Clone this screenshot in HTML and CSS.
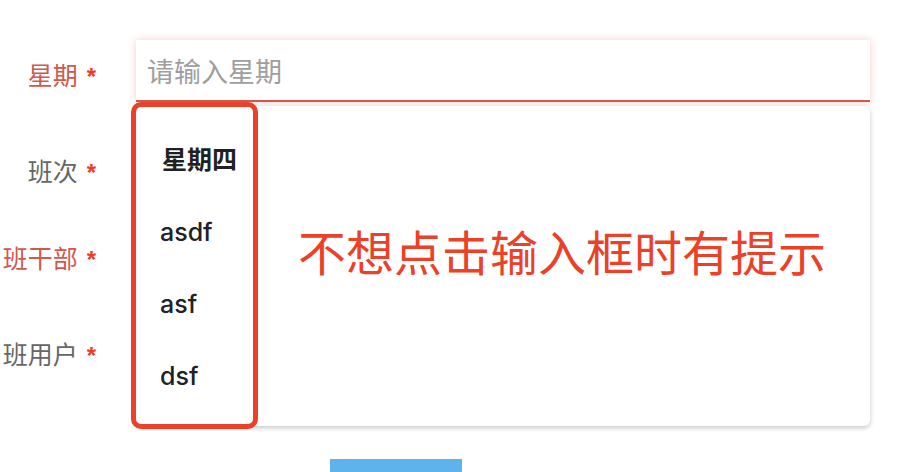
FILE: index.html
```html
<!DOCTYPE html>
<html lang="zh-CN">
<head>
<meta charset="utf-8">
<title>表单</title>
<link rel="stylesheet" href="styles.css">
</head>
<body>
<form class="form">
  <div class="row error">
    <label class="label">星期<span class="req">*</span></label>
    <div class="field">
      <input class="input input-active" type="text" placeholder="请输入星期">
      <ul class="dropdown">
        <li class="option selected">星期四</li>
        <li class="option">asdf</li>
        <li class="option">asf</li>
        <li class="option">dsf</li>
      </ul>
    </div>
  </div>
  <div class="row">
    <label class="label">班次<span class="req">*</span></label>
    <div class="field"><input class="input" type="text"></div>
  </div>
  <div class="row error">
    <label class="label">班干部<span class="req">*</span></label>
    <div class="field"><input class="input" type="text"></div>
  </div>
  <div class="row">
    <label class="label">班用户<span class="req">*</span></label>
    <div class="field"><input class="input" type="text"></div>
  </div>
  <div class="actions">
    <button class="btn" type="button"></button>
  </div>
  <div class="mark-box"></div>
  <div class="mark-text">不想点击输入框时有提示</div>
</form>
</body>
</html>
```

FILE: styles.css
```css
html, body {
  margin: 0;
  padding: 0;
  height: 472px;
  overflow: hidden;
  background: #ffffff;
  font-family: Inter, "Noto Sans CJK SC", sans-serif;
}

.form {
  position: relative;
  display: flex;
  flex-direction: column;
  padding-top: 40px;
}

.row {
  display: flex;
  align-items: center;
  height: 62px;
  margin-bottom: 25px;
}

.row.error {
  margin-bottom: 34px;
}

.label {
  width: 96px;
  margin-right: 40px;
  text-align: right;
  font-family: "Noto Sans CJK SC", sans-serif;
  font-size: 25px;
  line-height: 62px;
  padding-top: 8px;
  color: #666666;
  white-space: nowrap;
  box-sizing: border-box;
}

.row.error .label {
  color: #d2574c;
}

.req {
  color: #f03a2a;
  margin-left: 9px;
  font-family: "Liberation Sans", sans-serif;
  font-size: 24px;
  font-weight: 700;
}

.field {
  position: relative;
  width: 734px;
  height: 62px;
}

.input {
  display: block;
  width: 100%;
  height: 62px;
  box-sizing: border-box;
  margin: 0;
  border: none;
  border-bottom: 1px solid #dddddd;
  padding: 0 11px;
  font-family: "Noto Sans CJK SC", sans-serif;
  font-size: 27px;
  background: #ffffff;
  outline: none;
}

.input-active {
  border-bottom: 2px solid #d2574c;
  box-shadow: 0 0 8px rgba(230, 90, 80, 0.3);
}

.input::placeholder {
  color: #9e9e9e;
}

.dropdown {
  position: absolute;
  z-index: 2;
  top: 66px;
  left: 0;
  right: 0;
  height: 320px;
  box-sizing: border-box;
  margin: 0;
  padding: 18px 0 0 24px;
  list-style: none;
  background: #ffffff;
  border-radius: 6px;
  box-shadow: 0 2px 5px rgba(0, 0, 0, 0.22);
}

.option {
  height: 72px;
  line-height: 72px;
  font-size: 25px;
  font-weight: 500;
  color: #202124;
}

.option.selected {
  font-weight: 700;
  padding-left: 2px;
}

.actions {
  display: flex;
  margin-top: 53px;
  padding-left: 330px;
}

.btn {
  width: 132px;
  height: 14px;
  border: none;
  border-radius: 0;
  background: #5eb3ec;
}

.mark-box {
  position: absolute;
  z-index: 3;
  left: 131px;
  top: 102px;
  width: 127px;
  height: 327px;
  box-sizing: border-box;
  border: 5px solid #ea4128;
  border-radius: 10px;
}

.mark-text {
  position: absolute;
  z-index: 3;
  left: 298px;
  top: 222px;
  font-family: "Noto Sans CJK SC", sans-serif;
  font-size: 48px;
  line-height: 56px;
  color: #ea4128;
  white-space: nowrap;
}
```
